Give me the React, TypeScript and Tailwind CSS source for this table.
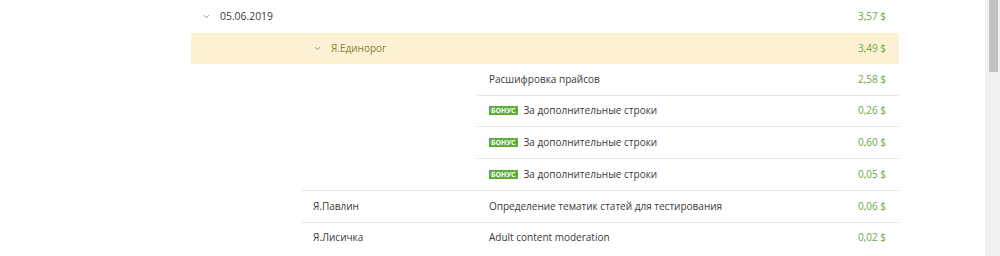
import React from 'react';

function Chevron() {
  return (
    <svg width="7" height="5" viewBox="0 0 7 5" className="shrink-0">
      <path d="M1 1.2l2.5 2.5 2.5-2.5" fill="none" stroke="#8c8c8c" strokeWidth="1" />
    </svg>
  );
}

function Bonus() {
  return (
    <span className="mr-[6px] inline-flex h-[9px] items-center bg-[#5fae3d] px-[2px] text-[7px] font-bold leading-none text-white">
      БОНУС
    </span>
  );
}

function Amount({ value }: { value: string }) {
  return <span className="ml-auto pr-[13px] text-[#6aa546]">{value} $</span>;
}

const tasks = [
  { bonus: false, title: 'Расшифровка прайсов', amount: '2,58' },
  { bonus: true, title: 'За дополнительные строки', amount: '0,26' },
  { bonus: true, title: 'За дополнительные строки', amount: '0,60' },
  { bonus: true, title: 'За дополнительные строки', amount: '0,05' },
];

const others = [
  { name: 'Я.Павлин', title: 'Определение тематик статей для тестирования', amount: '0,06' },
  { name: 'Я.Лисичка', title: 'Adult content moderation', amount: '0,02' },
];

export default function App() {
  return (
    <div className="relative h-[256px] w-[1000px] overflow-hidden bg-white font-['Open_Sans','Noto_Sans',sans-serif] text-[10px] text-[#3a3a3a]">
      <div className="ml-[191px] w-[708px]">
        {/* date row */}
        <div className="flex h-[33px] items-center">
          <div className="flex w-[111px] items-center gap-[10px] pl-[12px]">
            <Chevron />
            <span className="text-[10.4px]">05.06.2019</span>
          </div>
          <Amount value="3,57" />
        </div>

        {/* expanded employee */}
        <div className="flex h-[31px] items-center bg-[#fcf2d3]">
          <div className="w-[111px]" />
          <div className="flex items-center gap-[10px] pl-[12px] text-[#8b7b3f]">
            <Chevron />
            <span>Я.Единорог</span>
          </div>
          <Amount value="3,49" />
        </div>

        <div className="flex">
          <div className="w-[286px] shrink-0" />
          <div className="flex-1">
            {tasks.map((t, i) => (
              <div
                key={i}
                className={
                  'flex h-[31.5px] items-center pl-[12px] ' +
                  (i < tasks.length - 1 ? 'border-b border-[#e6e6e6]' : '')
                }
              >
                {t.bonus && <Bonus />}
                <span>{t.title}</span>
                <Amount value={t.amount} />
              </div>
            ))}
          </div>
        </div>

        {others.map((o) => (
          <div key={o.name} className="flex">
            <div className="w-[111px] shrink-0" />
            <div className="flex h-[31.5px] flex-1 items-center border-t border-[#e6e6e6]">
              <span className="w-[175px] shrink-0 pl-[11px]">{o.name}</span>
              <span className="pl-[12px]">{o.title}</span>
              <Amount value={o.amount} />
            </div>
          </div>
        ))}
      </div>

      {/* scrollbar */}
      <div className="absolute right-0 top-0 h-full w-[15px] bg-[#f1f1f1]">
        <div className="ml-[4px] h-[72px] w-[9px] bg-[#c1c1c1]" />
      </div>
    </div>
  );
}
